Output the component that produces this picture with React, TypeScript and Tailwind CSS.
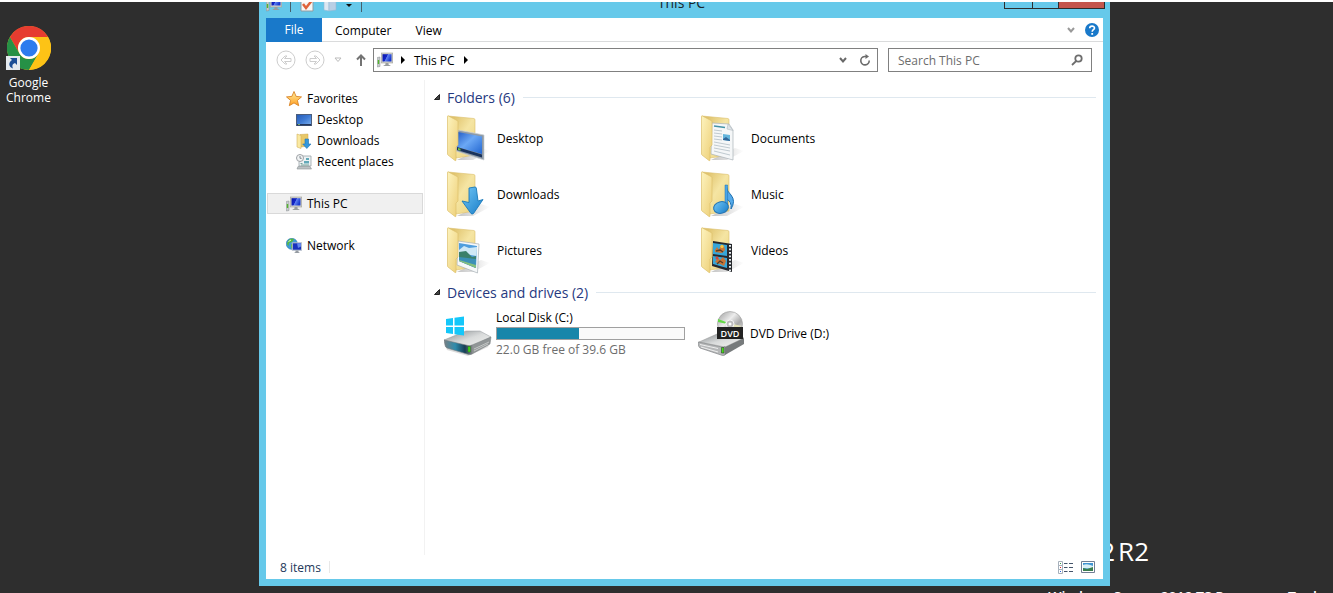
import type { ReactNode } from "react";

function ChromeLogo() {
  return (
    <svg viewBox="0 0 48 48" className="size-11" aria-hidden="true">
      <circle cx="24" cy="24" r="24" fill="#fbc116" />
      <path d="M3.2 12A24 24 0 0 1 44.8 12H24A12 12 0 0 0 13.6 30Z" fill="#e63c30" />
      <path d="M3.2 12 13.6 30A12 12 0 0 0 34.4 30L24 48A24 24 0 0 1 3.2 12Z" fill="#269146" />
      <path d="M24 12H44.8A24 24 0 0 1 24 48L34.4 30A12 12 0 0 0 24 12Z" fill="#fdc316" />
      <circle cx="24" cy="24" r="12" fill="#fff" />
      <circle cx="24" cy="24" r="9.4" fill="#2c7bee" />
    </svg>
  );
}

function ShortcutArrow() {
  return (
    <svg viewBox="0 0 14 14" className="size-3.5" aria-hidden="true">
      <rect width="14" height="14" fill="#e4eaef" />
      <path d="M4 2h7v7L9 7C6 8 6 10 7 12.5 2.500 11 2 6.500 6 4Z" fill="#1c4f96" />
    </svg>
  );
}

function ComputerIcon() {
  return (
    <svg viewBox="0 0 16 16" className="size-4 shrink-0" aria-hidden="true">
      <defs>
        <linearGradient id="screen" x1="0" y1="0" x2="1" y2="0.4">
          <stop offset="0" stopColor="#0817a8" />
          <stop offset="0.5" stopColor="#1526c8" />
          <stop offset="0.56" stopColor="#5f82f2" />
          <stop offset="1" stopColor="#1839cf" />
        </linearGradient>
      </defs>
      <path d="M.3 5.500 3 5V14.500L.3 15Z" fill="#c7cbcc" stroke="#858b8e" strokeWidth=".5" />
      <path d="M.8 8h1.400v4H.8Z" fill="#52b52c" />
      <rect x="4.300" y="1" width="11.400" height="10" fill="#d2d2cb" stroke="#a0a19b" strokeWidth=".6" />
      <rect x="5.500" y="2.200" width="9" height="7.300" fill="url(#screen)" />
      <path d="M8.500 11h3v1.500l2.500 1.500H6l2.500-1.500Z" fill="#999d9e" />
    </svg>
  );
}

function StarIcon() {
  return (
    <svg viewBox="0 0 16 16" className="size-4 shrink-0" aria-hidden="true">
      <defs>
        <linearGradient id="star" x1="0" y1="0" x2="0" y2="1">
          <stop offset="0" stopColor="#fff0a0" />
          <stop offset="1" stopColor="#ff9e22" />
        </linearGradient>
      </defs>
      <path d="M8 .5 10.100 5.400 15.500 5.900 11.400 9.400 12.700 14.700 8 11.900 3.300 14.700 4.600 9.400.5 5.900 5.900 5.400Z" fill="url(#star)" stroke="#d98326" strokeWidth=".9" strokeLinejoin="round" />
    </svg>
  );
}

function DesktopSmallIcon() {
  return (
    <svg viewBox="0 0 16 16" className="size-4 shrink-0" aria-hidden="true">
      <defs>
        <linearGradient id="desk" x1="0" y1="0" x2="1" y2="1">
          <stop offset="0" stopColor="#2459b4" />
          <stop offset=".5" stopColor="#3f7bd4" />
          <stop offset="1" stopColor="#7fb2ee" />
        </linearGradient>
      </defs>
      <rect x=".5" y="2.500" width="15" height="11" fill="url(#desk)" stroke="#4c5e7c" />
      <path d="M1 12h14v1.500H1Z" fill="#24375c" />
      <path d="M2 12.300h2v.8H2Z" fill="#8ecf73" />
    </svg>
  );
}

function DownloadsSmallIcon() {
  return (
    <svg viewBox="0 0 16 16" className="size-4 shrink-0" aria-hidden="true">
      <path d="M4 1.500 12 1v12l-7 1Z" fill="#e8c868" stroke="#cda64a" strokeWidth=".5" />
      <path d="m1 1 4 1.500V15.500L1 14Z" fill="#fae9a2" stroke="#d5b45d" strokeWidth=".6" />
      <path d="M9 6h3.500v5H15l-4.200 4.500L6.700 11H9Z" fill="#3297dc" stroke="#1f73b3" strokeWidth=".6" />
    </svg>
  );
}

function RecentIcon() {
  return (
    <svg viewBox="0 0 16 16" className="size-4 shrink-0" aria-hidden="true">
      <path d="M6 2h9v10H3V8Z" fill="#edf2f4" stroke="#9aa3a8" strokeWidth=".8" />
      <path d="M10 4h3v2h-3ZM8 7h5v2.500H8Z" fill="#62a9b8" />
      <path d="M4.500 9.500h2M5 11h8" stroke="#76a59c" />
      <circle cx="4" cy="4" r="3.500" fill="#f2f4f5" stroke="#9da1a5" />
      <path d="M4 2v2.300h1.700" fill="none" stroke="#64727c" strokeWidth=".8" />
      <path d="m2 12.500-1 2.500h14.500l-1.500-2.500Z" fill="#bcc2c4" stroke="#8d9497" strokeWidth=".6" />
    </svg>
  );
}

function NetworkIcon() {
  return (
    <svg viewBox="0 0 16 16" className="size-4 shrink-0" aria-hidden="true">
      <circle cx="5.800" cy="5.800" r="5.600" fill="#3d9bd8" stroke="#2870ac" strokeWidth=".5" />
      <path d="M2 3C4 0 7 0 8 1.500L6 4 3 5 2.500 8 .8 6ZM5 6l4 1-2 4.300-2-1.500Z" fill="#56b843" />
      <path d="M2.500 3.500 5 2" stroke="#e8ffd7" />
      <rect x="6.300" y="4.800" width="9.200" height="7.400" fill="#1831bd" stroke="#bbc2ca" />
      <path d="M11 5.300h4v3.200l-3 1.500Z" fill="#6286ee" />
      <path d="M9.500 12.500h3v1.500l1.500 1H8l1.500-1Z" fill="#959ba2" />
    </svg>
  );
}

function FolderIcon({ children }: { children: ReactNode }) {
  return (
    <svg viewBox="0 0 48 48" className="size-12 shrink-0" aria-hidden="true">
      <defs>
        <linearGradient id="folderFront" x1="0" y1="0" x2="1" y2="1">
          <stop offset="0" stopColor="#fdf3be" />
          <stop offset="1" stopColor="#edcf77" />
        </linearGradient>
        <linearGradient id="folderBack" x1="0" y1="0" x2="1" y2="1">
          <stop offset="0" stopColor="#d9b85b" />
          <stop offset=".5" stopColor="#f5e5a3" />
          <stop offset="1" stopColor="#ecd27c" />
        </linearGradient>
        <linearGradient id="shade" x1="0" y1="0" x2="1" y2="0">
          <stop offset="0" stopColor="#888" stopOpacity=".5" />
          <stop offset="1" stopColor="#888" stopOpacity="0" />
        </linearGradient>
        <linearGradient id="blue" x1="0" y1="0" x2="1" y2="1">
          <stop offset="0" stopColor="#225bc5" />
          <stop offset=".45" stopColor="#6ba8f5" />
          <stop offset="1" stopColor="#2165d0" />
        </linearGradient>
        <linearGradient id="cyan" x1="0" y1="0" x2="1" y2="1">
          <stop offset="0" stopColor="#72c7f6" />
          <stop offset="1" stopColor="#197dc8" />
        </linearGradient>
      </defs>
      <path d="M12 46 36 34l9 3-17 9Z" fill="url(#shade)" />
      <path d="m3 2 26 2.500q1 .2 1 1.500v35l-19 3Z" fill="url(#folderBack)" stroke="#dcc06c" strokeWidth=".6" />
      {children}
      <path d="M2.500 2.500q0-1 1-.5L13 7v24l-2 2v13q0 1-1 .5L3 41q-.5-.3-.5-1Z" fill="url(#folderFront)" stroke="#dcc06c" strokeWidth=".7" />
    </svg>
  );
}

const desktopArt = (
  <>
    <path d="m13 16 26 5v25l-28-9Z" fill="#8f9aa5" stroke="#c9d0d6" strokeWidth=".7" />
    <path d="m13 18 24 4.500v17.500L12 33Z" fill="url(#blue)" />
    <path d="m12 33 25 7.500v3L12 36Z" fill="#19335c" />
    <path d="m13 34 2.500.8v2L13 36Z" fill="#6fc245" />
  </>
);
const documentsArt = (
  <>
    <path d="m13 9 17 1 4 6v30L12 40Z" fill="#f5f7f8" stroke="#a9b2b8" strokeWidth=".7" />
    <path d="m29 10-1 5 6 1.500Z" fill="#dfe4e8" stroke="#a9b2b8" strokeWidth=".5" />
    <path d="m15 12 11 1.500" stroke="#4493a7" strokeWidth="1.500" />
    <path d="m15 16 8 1m-8 2 8 1m-8 2 8 1m-8 2 8 1m-8 2 16 3M15 31l16 3m-16 0 16 3m-16 0 16 4" stroke="#b9c4cb" strokeWidth=".9" />
    <path d="m24 20 7 1v6l-7-1Z" fill="#64b5dc" />
    <path d="m24 25 3-2 4 3v1l-7-1Z" fill="#31679a" />
  </>
);
const downloadsArt = (
  <path d="m24 18 6-1q1 0 1.300 1L33 31l5-1.500L28.500 43.500q-1.500 1-2.500 0L17 31l7 1.500Z" fill="url(#cyan)" stroke="#1879ba" strokeWidth=".9" strokeLinejoin="round" />
);
const musicArt = (
  <>
    <path d="M27 15q1 7 5 10 5 6 0 14 1-8-5-10Z" fill="#55aaea" stroke="#1c70b1" strokeWidth="1" />
    <path d="M26 15h2.600v24H26Z" fill="#4aa5e7" stroke="#1c70b1" strokeWidth=".5" />
    <ellipse cx="22" cy="37.500" rx="7.500" ry="5.800" transform="rotate(-15 22 37.500)" fill="url(#cyan)" stroke="#2575b5" />
  </>
);
const picturesArt = (
  <>
    <path d="m13 15 21 3-1.500 29L12 39Z" fill="#f6f8f9" stroke="#a8b0b6" strokeWidth=".7" />
    <path d="m14 17 18 3-1 22-17-7Z" fill="#4f9ede" />
    <path d="m14 24 5-4 5 2 8-1-.5 9-17.500-3Z" fill="#cfe8f6" />
    <path d="m14 26 7-1 6 6 4-1v4l-17-2Z" fill="#3b806b" />
    <path d="m14 31 17 2-.5 9-16.500-7Z" fill="#3c90b7" />
    <path d="m14 34 17 5v3l-17-7Z" fill="#85bf7e" />
  </>
);
const videosArt = (
  <>
    <path d="m14 15 19 3v28l-20-6Z" fill="#27292d" />
    <path d="m14 17 14 2v11l-14-2Zm0 13 14 2v10l-14-4Z" fill="#36a6d8" />
    <path d="m16 24 2-3 2 3 2-5 3 1 1 4-3 3-7-1Zm0 12 3-4 2 2 3-3 3 4-2 5-4-2Z" fill="#c87536" />
    <circle cx="23" cy="20.500" r="1.700" fill="#f5c642" />
    <circle cx="18" cy="32" r="1.500" fill="#d6473d" />
    <path d="m17 25 4-1 3 2m-6 12 3-3 3 2" fill="none" stroke="#563d26" strokeWidth="1.300" />
    <path d="M31 19v26" stroke="#e9eff2" strokeWidth="2" strokeDasharray="1.800 1.700" />
  </>
);

function DriveDefs() {
  return (
    <defs>
      <linearGradient id="driveTop" x1="0" y1="0" x2="1" y2="1">
        <stop offset="0" stopColor="#858a8d" />
        <stop offset=".5" stopColor="#d9dbdb" />
        <stop offset="1" stopColor="#f5f5f3" />
      </linearGradient>
      <linearGradient id="driveFront" x1="0" y1="0" x2="1" y2="0">
        <stop offset="0" stopColor="#787f83" />
        <stop offset=".4" stopColor="#2e8cac" />
        <stop offset=".75" stopColor="#173d54" />
        <stop offset="1" stopColor="#858789" />
      </linearGradient>
      <linearGradient id="disc" x1="0" y1="0" x2="1" y2="1">
        <stop offset="0" stopColor="#999" />
        <stop offset=".4" stopColor="#ececec" />
        <stop offset=".65" stopColor="#a9a9a9" />
        <stop offset="1" stopColor="#eee" />
      </linearGradient>
    </defs>
  );
}

function LocalDiskIcon() {
  return (
    <svg viewBox="0 0 48 48" className="size-12 shrink-0" aria-hidden="true">
      <DriveDefs />
      <path d="m1 36 22 9 23-12-2 5-20 9L3 41Z" fill="#777" opacity=".25" />
      <path d="m0 31 22-9h14l11 6-20 10q-2 1-4 0Z" fill="url(#driveTop)" stroke="#95999c" strokeWidth=".5" />
      <path d="m0 31 24 5.500q2 .5 4-.5v9q-2 1-5 0L3 39q-2-1-2-3Z" fill="url(#driveFront)" stroke="#747a7e" strokeWidth=".6" />
      <path d="m28 36 19-8-1 7-18 10Z" fill="#909596" stroke="#787e80" strokeWidth=".5" />
      <path d="M24 37.500h2.300v5.500H24Z" fill="#42dd18" stroke="#276f1a" strokeWidth=".5" />
      <path d="m30 40 15-7m-15 9 14-7" stroke="#d0d3d2" strokeWidth=".8" />
      <path d="m2 10 7-1v7.500H2Zm8.500-1.200L20 7.500v9h-9.500ZM2 18h7v7l-7-1Zm8.500 0H20v8.500l-9.500-1.200Z" fill="#14c7fa" />
    </svg>
  );
}

function DvdIcon() {
  return (
    <svg viewBox="0 0 48 48" className="size-12 shrink-0" aria-hidden="true">
      <DriveDefs />
      <circle cx="32" cy="15" r="12.500" fill="url(#disc)" stroke="#9b9b9b" strokeWidth=".6" />
      <path d="m20 10 8 3-1 1.500-7-1.500Z" fill="#62d946" />
      <path d="m35 15 9 2-9 3Z" fill="#f1efb8" opacity=".8" />
      <circle cx="32" cy="15" r="4" fill="#bcbcbc" stroke="#f3f3f3" />
      <circle cx="32" cy="15" r="1.500" fill="#fff" />
      <path d="m1 33 18-8h18l9 4-19 9Z" fill="url(#driveTop)" stroke="#999" strokeWidth=".5" />
      <path d="m0 33 24 5q2 .5 3-.5V46q-2 1-4 0L2 39q-1-1-2-3Z" fill="#b6b8b9" stroke="#777b7c" strokeWidth=".6" />
      <path d="m2 35.500 18 4M3 38l17 5" stroke="#eee" />
      <path d="m27 38 19-9v6L27 46Z" fill="#777b7c" />
      <path d="M23.500 38.500H26v5.500h-2.500Z" fill="#45dc1b" stroke="#303930" strokeWidth=".6" />
      <rect x="19" y="18" width="26" height="12" fill="#222" />
      <text x="32" y="27.500" textAnchor="middle" fontSize="9" fontFamily="Open Sans, sans-serif" fontWeight="600" fill="#fff">DVD</text>
    </svg>
  );
}

function Triangle({ className }: { className: string }) {
  return (
    <svg viewBox="0 0 8 8" className={className} fill="currentColor" aria-hidden="true">
      <path d="M2 0v8l4-4Z" />
    </svg>
  );
}

function Chevron() {
  return (
    <svg viewBox="0 0 8 8" className="size-2" fill="none" stroke="currentColor" strokeWidth="2" aria-hidden="true">
      <path d="m1 2 3 3.500L7 2" />
    </svg>
  );
}

function RoundArrow({ flip = false }: { flip?: boolean }) {
  return (
    <svg viewBox="0 0 20 20" className={flip ? "size-5 -scale-x-100" : "size-5"} fill="none" stroke="#cdcdcd" aria-hidden="true">
      <circle cx="10" cy="10" r="9" />
      <path d="m5 10 4-4h2L8.500 8.500H15v3H8.500L11 14H9Z" />
    </svg>
  );
}

function SideItem({ icon, label, nested, selected }: { icon: ReactNode; label: string; nested?: boolean; selected?: boolean }) {
  return (
    <a
      href="#"
      aria-current={selected ? "page" : undefined}
      className={`flex h-[21px] items-center gap-[5px] border ${nested ? "pl-[28px]" : "pl-[18px]"} ${selected ? "border-[#d9d9d9] bg-[#f0f0f0]" : "border-transparent"}`}
    >
      {icon}
      {label}
    </a>
  );
}

function GroupHeading({ children }: { children: ReactNode }) {
  return (
    <h2 className="flex h-6 items-center text-[14px] text-[#26397f]">
      <svg viewBox="0 0 8 8" className="mr-1.5 size-2" aria-hidden="true">
        <path d="M6.500 1.500v5h-5Z" fill="#444" stroke="#222" />
      </svg>
      {children}
      <span className="ml-2 h-px grow bg-[#dfe8ef]" />
    </h2>
  );
}

function Folder({ art, label }: { art: ReactNode; label: string }) {
  return (
    <a href="#" className="flex h-14 items-center gap-1">
      <FolderIcon>{art}</FolderIcon>
      {label}
    </a>
  );
}

function TitleBar() {
  return (
    <header className="flex h-4 items-end overflow-hidden">
      <div className="grid h-7 grow grid-cols-[1fr_auto_1fr] items-center pr-[5px] pl-[7px]">
        <div className="flex items-center gap-2">
          <ComputerIcon />
          <span className="h-4 w-px bg-[#45606c]" />
          <svg viewBox="0 0 16 16" className="size-4" aria-hidden="true">
            <path d="M2 1h12v14H2Z" fill="#f8f7f5" stroke="#929ba0" />
            <path d="m4 8 3 4 7-9" fill="none" stroke="#e0633a" strokeWidth="2.500" />
          </svg>
          <svg viewBox="0 0 14 16" className="h-4 w-3.5" aria-hidden="true">
            <path d="m1 1 5 2v12l-5-1Z" fill="#dce7f2" stroke="#94b8d3" strokeWidth=".6" />
            <path d="m6 2 7-1v13l-7 1Z" fill="#b9cfe5" stroke="#94b8d3" strokeWidth=".6" />
          </svg>
          <svg viewBox="0 0 8 8" className="size-2" aria-hidden="true"><path d="M1 4h6L4 7Z" fill="#111" /></svg>
          <span className="h-4 w-px bg-[#45606c]" />
        </div>
        <h1 className="pr-2 pb-1 text-[14px] text-[#18242a]">This PC</h1>
        <div className="flex justify-end self-start">
          <button aria-label="Minimize" className="h-[19px] w-[29px] border border-[#2d2d2d]" />
          <button aria-label="Maximize" className="-ml-px h-[19px] w-[27px] border border-[#2d2d2d]" />
          <button aria-label="Close" className="-ml-px h-[19px] w-[47px] border border-[#2d2d2d] bg-[#c4564d]" />
        </div>
      </div>
    </header>
  );
}

function Ribbon() {
  return (
    <nav className="flex h-6 items-center border-b border-[#dadbdc]" aria-label="Ribbon">
      <button className="h-6 w-14 bg-[#1979ca] text-white">File</button>
      <button className="ml-[13px] pt-0.5">Computer</button>
      <button className="ml-6 pt-0.5">View</button>
      <div className="ml-auto flex items-center gap-2.5 pr-1">
        <button aria-label="Expand the Ribbon" className="text-[#999]"><Chevron /></button>
        <button aria-label="Help">
          <svg viewBox="0 0 14 14" className="size-3.5" aria-hidden="true">
            <circle cx="7" cy="7" r="7" fill="#1979ca" />
            <path d="M4.700 5.200C4.700 2.500 9.500 2.300 9.500 5.100 9.500 6.700 7.200 6.800 7.200 8.700" fill="none" stroke="#fff" strokeWidth="1.600" />
            <path d="M6.300 10h1.800v1.800H6.300Z" fill="#fff" />
          </svg>
        </button>
      </div>
    </nav>
  );
}

function NavigationBar() {
  return (
    <div className="flex h-9 items-center pr-[11px] pl-[10px]">
      <button aria-label="Back"><RoundArrow /></button>
      <button aria-label="Forward" className="ml-[9px]"><RoundArrow flip /></button>
      <button aria-label="Recent locations" className="ml-[9px]">
        <svg viewBox="0 0 8 8" className="size-2" fill="none" stroke="#bbb" aria-hidden="true"><path d="M1 2h6L4 5.500Z" /></svg>
      </button>
      <button aria-label="Up" className="ml-[13px]">
        <svg viewBox="0 0 12 14" className="h-3.5 w-3" fill="none" stroke="#737373" strokeWidth="2" aria-hidden="true"><path d="M6 13V2M2 6.500 6 2.500l4 4" /></svg>
      </button>
      <div className="ml-1.5 flex h-6 grow items-center border border-[#808080] pr-1.5 pl-[3px]">
        <ComputerIcon />
        <Triangle className="ml-1.5 size-2" />
        <button className="ml-[7px]">This PC</button>
        <Triangle className="ml-[7px] size-2" />
        <button aria-label="Previous locations" className="ml-auto text-[#686868]"><Chevron /></button>
        <button aria-label="Refresh" className="ml-[12px]">
          <svg viewBox="0 0 12 12" className="size-3" fill="none" stroke="#6b6b6b" strokeWidth="1.600" aria-hidden="true">
            <path d="M7 2.500H5.500A4.200 4.200 0 1 0 10.200 6.500" />
            <path d="M6.500 0 10 2.500 6.500 5Z" fill="#6b6b6b" stroke="none" />
          </svg>
        </button>
      </div>
      <label className="ml-2.5 flex h-6 w-[204px] items-center border border-[#808080] pr-2 pl-[9px]">
        <input aria-label="Search This PC" placeholder="Search This PC" className="min-w-0 grow outline-none placeholder:text-[#6d6d6d]" />
        <svg viewBox="0 0 12 12" className="size-3" fill="none" stroke="#6d6d6d" strokeWidth="1.800" aria-hidden="true">
          <circle cx="7.500" cy="4.500" r="3.200" />
          <path d="M5.200 7 1 11" />
        </svg>
      </label>
    </div>
  );
}

export default function App() {
  return (
    <div className="relative grid h-screen grid-cols-[259px_1fr_223px] overflow-hidden border-t-2 border-white bg-[#2e2e2e] font-['Open_Sans','Noto_Sans',sans-serif] text-[12px] leading-[15px] text-black">
      <div className="absolute right-[184px] bottom-6 flex gap-[3px] text-[26px] leading-9 text-white">
        <span>Windows Server 2012</span>
        <span>R2</span>
      </div>
      <div className="absolute right-4 -bottom-3 text-[14px] leading-4 font-semibold whitespace-nowrap text-white">Windows Server 2012 TS Resources Tool</div>

      <aside>
        <a href="#" className="mt-6 flex w-[57px] flex-col items-center gap-[5px] text-center text-white">
          <span className="relative">
            <ChromeLogo />
            <span className="absolute bottom-0 -left-px"><ShortcutArrow /></span>
          </span>
          <span>Google<br />Chrome</span>
        </a>
      </aside>

      <section className="relative mb-[7px] flex min-w-0 flex-col bg-[#66c9ea]" aria-label="File Explorer">
        <TitleBar />
        <div className="mx-[7px] mb-[7px] flex grow flex-col bg-white">
          <Ribbon />
          <NavigationBar />
          <div className="flex grow pt-0.5">
            <nav className="w-[159px] border-r border-[#f2f2f2] px-px pt-2" aria-label="Navigation pane">
              <SideItem icon={<StarIcon />} label="Favorites" />
              <SideItem icon={<DesktopSmallIcon />} label="Desktop" nested />
              <SideItem icon={<DownloadsSmallIcon />} label="Downloads" nested />
              <SideItem icon={<RecentIcon />} label="Recent places" nested />
              <div className="my-[21px]"><SideItem icon={<ComputerIcon />} label="This PC" selected /></div>
              <SideItem icon={<NetworkIcon />} label="Network" />
            </nav>
            <main className="grow pt-[5px] pr-[7px] pl-2">
              <GroupHeading>Folders (6)</GroupHeading>
              <div className="grid grid-cols-[254px_254px] pt-px pl-3">
                <Folder art={desktopArt} label="Desktop" />
                <Folder art={documentsArt} label="Documents" />
                <Folder art={downloadsArt} label="Downloads" />
                <Folder art={musicArt} label="Music" />
                <Folder art={picturesArt} label="Pictures" />
                <Folder art={videosArt} label="Videos" />
              </div>
              <div className="pt-0.5">
                <GroupHeading>Devices and drives (2)</GroupHeading>
              </div>
              <div className="grid grid-cols-[254px_254px] pt-px pl-[11px]">
                <a href="#" className="flex h-14 items-center gap-1">
                  <LocalDiskIcon />
                  <span className="flex w-[189px] flex-col gap-0.5">
                    <span>Local Disk (C:)</span>
                    <span className="block h-[13px] border border-[#a0a0a0] bg-[#fafafa]">
                      <span className="block h-full w-[44%] bg-[#1786aa]" />
                    </span>
                    <span className="text-[#6d6d6d]">22.0 GB free of 39.6 GB</span>
                  </span>
                </a>
                <a href="#" className="flex h-14 items-center gap-1">
                  <DvdIcon />
                  DVD Drive (D:)
                </a>
              </div>
            </main>
          </div>
          <footer className="flex h-6 items-center pr-2 pl-3.5 text-[#1e395b]">
            8 items
            <span className="ml-2 h-3 w-px bg-[#e8e8e8]" />
            <div className="ml-auto flex items-center gap-2">
              <button aria-label="Details view">
                <svg viewBox="0 0 15 13" className="h-[13px] w-[15px]" aria-hidden="true">
                  <path d="M.5.5h4v4h-4Zm0 4h4v4h-4Zm0 4h4v4h-4Z" fill="#fff" stroke="#a6b0bb" />
                  <path d="M6 2.500h3.500M11 2.500h4M6 6.500h3.500M11 6.500h4M6 10.500h3.500M11 10.500h4" stroke="#44546a" />
                  <path d="M2 2h1v1H2Z" fill="#3d9c40" />
                  <path d="M2 6h1v1H2Z" fill="#d22" />
                  <path d="M2 10h1v1H2Z" fill="#2861dd" />
                </svg>
              </button>
              <button aria-label="Thumbnails view">
                <svg viewBox="0 0 14 12" className="h-3 w-3.5" aria-hidden="true">
                  <path d="M.5.5h13v11H.5Z" fill="#fff" stroke="#707e94" />
                  <path d="M2 2h10v8H2Z" fill="#3f94d2" />
                  <path d="M2 4q4-2 10 1v3L2 7Z" fill="#d7eff6" />
                  <path d="m2 7 4 1 6-2v4H2Z" fill="#397d4e" />
                </svg>
              </button>
            </div>
          </footer>
        </div>
      </section>
    </div>
  );
}
